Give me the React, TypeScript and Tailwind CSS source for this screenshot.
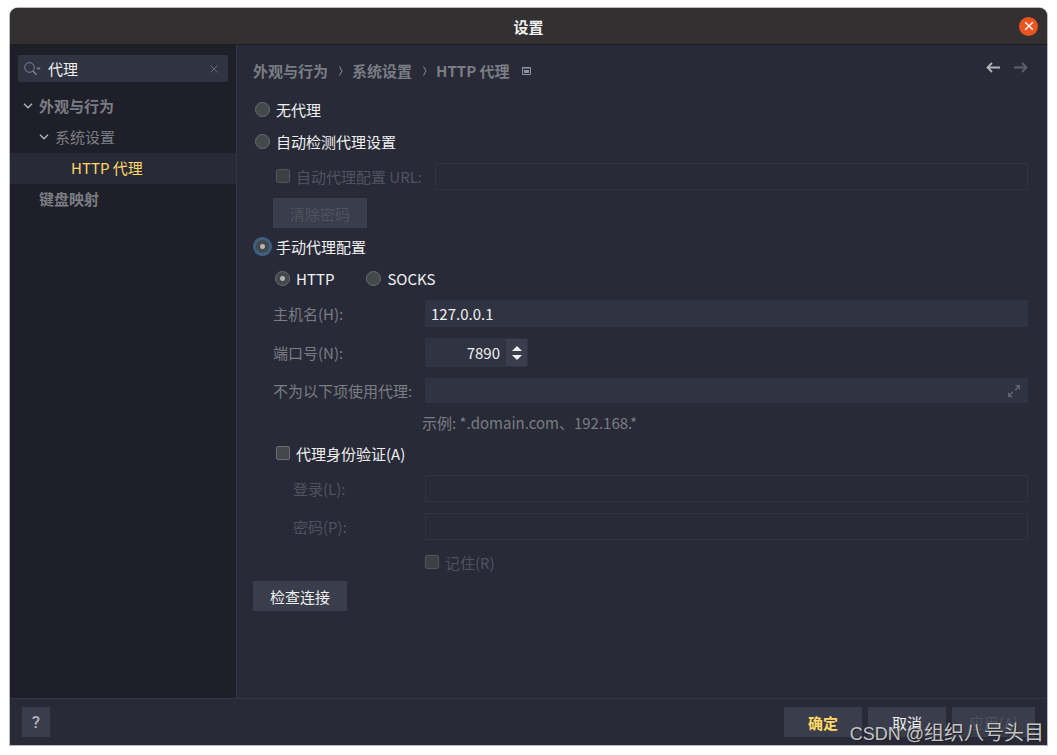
import { useState } from 'react'
import type { InputHTMLAttributes, ReactNode } from 'react'

type ProxyMode = 'none' | 'auto' | 'manual'
type ProxyKind = 'http' | 'socks'

const FIELD = 'min-w-0 flex-1 px-1.5 outline-none'
const FIELD_ON = 'bg-[#303341] text-[#f0f0f0]'
const FIELD_OFF = 'border border-[#303341] bg-transparent'
const BUTTON = 'h-[30px] bg-[#3a3d4c] text-center'

export default function App() {
  return (
    <div className="h-screen min-h-[720px] bg-white px-[10px] pt-2 pb-[10px] font-['Noto_Sans_CJK_SC',sans-serif] text-[15px] leading-6 text-[#f0f0f0]">
      <div className="relative flex h-full flex-col rounded-t-lg bg-[#282a38] ring-1 ring-[#b9b9bf]">
        <header className="grid h-[37px] shrink-0 grid-cols-[1fr_auto_1fr] items-center rounded-t-lg border-b border-[#1d1d1d] bg-[#323030] px-[9px]">
          <h1 className="col-start-2 pt-0.5 font-bold">设置</h1>
          <button
            aria-label="关闭"
            className="flex size-[19px] items-center justify-center justify-self-end rounded-full bg-[#e95420]"
          >
            <svg viewBox="0 0 10 10" className="size-[10px]" fill="none" stroke="#fff" strokeWidth="1.4" aria-hidden>
              <path d="M1.2 1.2l7.6 7.6M8.8 1.2L1.2 8.8" />
            </svg>
          </button>
        </header>

        <div className="flex min-h-0 flex-1">
          <Sidebar />
          <ProxyPanel />
        </div>

        <footer className="flex h-[47px] shrink-0 items-center gap-1.5 border-t border-[#323544] pr-3 pl-3">
          <button
            aria-label="帮助"
            className="mr-auto h-[30px] w-7 bg-[#3a3d4c] font-[Roboto,sans-serif] text-[17px] font-medium text-[#b4b4b6]"
          >
            ?
          </button>
          <button className={`${BUTTON} w-[78px] pt-0.5 font-bold text-[#ffd866]`}>确定</button>
          <button className={`${BUTTON} w-[78px] pt-0.5`}>取消</button>
          <button className={`${BUTTON} w-[83px] pt-0.5 text-[#50535f]`} disabled>
            应用(A)
          </button>
        </footer>

        <p className="pointer-events-none absolute right-[3px] -bottom-[3px] font-['Noto_Sans_CJK_SC',sans-serif] text-[20px] leading-7 text-[#c4c4c8] [text-shadow:1px_1px_1px_#222]">
          <span className="font-['Liberation_Sans',sans-serif] text-[18px]">CSDN @</span>组织八号头目
        </p>
      </div>
    </div>
  )
}

function Sidebar() {
  return (
    <aside className="w-[227px] shrink-0 border-r border-[#323544] bg-[#1f1f29] pt-[10px]">
      <div className="mx-2 flex h-[27px] items-center rounded-xs bg-[#303341] pr-[10px] pl-1.5">
        <svg viewBox="0 0 18 14" className="h-[14px] w-[18px] shrink-0" fill="none" stroke="#808591" aria-hidden>
          <circle cx="5.5" cy="5.5" r="4.8" />
          <path d="M9 9l3.5 3.8" strokeWidth="1.4" />
          <path d="M12.2 5.5h4.6l-2.3 2.6z" fill="#808591" stroke="none" />
        </svg>
        <input
          aria-label="搜索设置"
          defaultValue="代理"
          className="ml-1.5 h-[27px] min-w-0 flex-1 outline-none"
        />
        <button aria-label="清除">
          <svg viewBox="0 0 8 8" className="size-2" fill="none" stroke="#646976" aria-hidden>
            <path d="M.5 .5l7 7M7.5 .5l-7 7" />
          </svg>
        </button>
      </div>

      <ul className="mt-[9px] text-[#7a7d83]">
        <TreeItem className="pl-[13px] font-bold" open>
          外观与行为
        </TreeItem>
        <TreeItem className="pl-[29px]" open>
          系统设置
        </TreeItem>
        <TreeItem className="bg-[#282a38] pl-[61px] text-[#ffd866]">HTTP 代理</TreeItem>
        <TreeItem className="pl-[29px] font-bold">键盘映射</TreeItem>
      </ul>
    </aside>
  )
}

function TreeItem({ children, className, open }: { children: ReactNode; className: string; open?: boolean }) {
  return (
    <li className={`flex h-[31px] items-center pb-0.5 ${className}`}>
      {open && (
        <svg viewBox="0 0 10 6" className="mr-1.5 h-1.5 w-[10px]" fill="none" stroke="#b4b4b6" strokeWidth="1.4" aria-hidden>
          <path d="M1 .8l4 4 4-4" />
        </svg>
      )}
      <a href="#">{children}</a>
    </li>
  )
}

function ProxyPanel() {
  const [mode, setMode] = useState<ProxyMode>('manual')
  const [kind, setKind] = useState<ProxyKind>('http')
  const [port, setPort] = useState(7890)

  return (
    <main className="min-w-0 flex-1 pr-[19px] pl-4">
      <div className="flex h-[52px] items-center">
        <nav aria-label="路径" className="flex items-center font-bold text-[#7a7d83]">
          <a href="#">外观与行为</a>
          <Separator />
          <a href="#">系统设置</a>
          <Separator />
          <a href="#">HTTP 代理</a>
        </nav>
        <svg viewBox="0 0 9 8" className="ml-3 h-2 w-[9px]" fill="none" stroke="#8d95a3" aria-hidden>
          <path d="M.5 .5h8v7h-8z" />
          <path d="M0 1h9" />
          <path d="M2 3h5v3H2z" fill="#8d95a3" stroke="none" />
        </svg>
        <div className="mb-2 ml-auto flex gap-[14px]">
          <button aria-label="后退">
            <Arrow className="h-[11px] w-3.5 text-[#b4b4b6]" />
          </button>
          <button aria-label="前进" disabled>
            <Arrow className="h-[11px] w-3.5 rotate-180 text-[#5f6066]" />
          </button>
        </div>
      </div>

      {/* 无代理 / 自动检测 */}
      <Radio name="mode" checked={mode === 'none'} onChange={() => setMode('none')}>
        无代理
      </Radio>
      <Radio className="mt-2" name="mode" checked={mode === 'auto'} onChange={() => setMode('auto')}>
        自动检测代理设置
      </Radio>
      <div className="mt-[10px] flex h-[27px] items-stretch gap-[13px] pl-[23px]">
        <Check className="pb-0.5" disabled>
          自动代理配置 URL:
        </Check>
        <input aria-label="自动代理配置 URL" disabled className={`${FIELD} ${FIELD_OFF}`} />
      </div>
      <button disabled className={`${BUTTON} mt-2 ml-5 block w-[94px] pt-0.5 text-[#50535f]`}>
        清除密码
      </button>

      {/* 手动代理 */}
      <Radio className="mt-1.5" name="mode" ring checked={mode === 'manual'} onChange={() => setMode('manual')}>
        手动代理配置
      </Radio>
      <div className="mt-2 flex gap-[30px] pl-5">
        <Radio name="kind" checked={kind === 'http'} onChange={() => setKind('http')}>
          HTTP
        </Radio>
        <Radio name="kind" checked={kind === 'socks'} onChange={() => setKind('socks')}>
          SOCKS
        </Radio>
      </div>

      <div className="mt-[10px] flex h-[27px]">
        <Label id="host">主机名(H):</Label>
        <input id="host" defaultValue="127.0.0.1" className={`${FIELD} ${FIELD_ON}`} />
      </div>
      <div className="mt-[11px] flex h-[29px]">
        <Label id="port">端口号(N):</Label>
        <div className="flex w-[103px] rounded-xs bg-[#303341] p-px">
          <input
            id="port"
            inputMode="numeric"
            value={port}
            onChange={(e) => setPort(Number(e.target.value) || 0)}
            className="min-w-0 flex-1 pr-1.5 text-right outline-none"
          />
          <div className="flex w-[21px] flex-col items-center justify-center gap-1 bg-[#3a3d4c]">
            <button aria-label="增加" onClick={() => setPort(port + 1)}>
              <svg viewBox="0 0 10 5" className="h-[5px] w-[10px]" fill="#f0f0f0" aria-hidden>
                <path d="M5 0l5 5H0z" />
              </svg>
            </button>
            <button aria-label="减少" onClick={() => setPort(port - 1)}>
              <svg viewBox="0 0 10 5" className="h-[5px] w-[10px]" fill="#f0f0f0" aria-hidden>
                <path d="M0 0h10L5 5z" />
              </svg>
            </button>
          </div>
        </div>
      </div>
      <div className="mt-[11px] flex h-[25px]">
        <Label id="bypass">不为以下项使用代理:</Label>
        <div className="flex min-w-0 flex-1 items-center bg-[#303341] pr-2">
          <input id="bypass" className={`${FIELD} h-[25px]`} />
          <button aria-label="展开">
            <svg viewBox="0 0 12 12" className="size-3" fill="#5c616d" aria-hidden>
              <path d="M7 0h5v5l-1.7-1.7-2.5 2.5-1.2-1.2 2.5-2.5z" />
              <path d="M5 12H0V7l1.7 1.7 2.5-2.5 1.2 1.2-2.5 2.5z" />
            </svg>
          </button>
        </div>
      </div>
      <p className="mt-2 pl-[169px] text-[#7a7d83]">示例: *.domain.com、192.168.*</p>

      {/* 身份验证 */}
      <Check className="mt-1.5 ml-[23px]">代理身份验证(A)</Check>
      <div className="mt-[10px] flex h-[27px]">
        <Label id="login" nested>
          登录(L):
        </Label>
        <input id="login" disabled className={`${FIELD} ${FIELD_OFF}`} />
      </div>
      <div className="mt-[11px] flex h-[27px]">
        <Label id="password" nested>
          密码(P):
        </Label>
        <input id="password" type="password" disabled className={`${FIELD} ${FIELD_OFF}`} />
      </div>
      <Check className="mt-[10px] ml-[172px]" disabled>
        记住(R)
      </Check>

      <button className={`${BUTTON} mt-[7px] block w-[94px] pt-0.5`}>检查连接</button>
    </main>
  )
}

function Separator() {
  return (
    <svg viewBox="0 0 4 10" className="mr-[9px] ml-[11px] h-[10px] w-1" fill="none" stroke="#8b8e94" aria-hidden>
      <path d="M.5 .5L3 5 .5 9.5" />
    </svg>
  )
}

function Arrow({ className }: { className: string }) {
  return (
    <svg viewBox="0 0 14 11" className={className} fill="none" stroke="currentColor" strokeWidth="1.8" aria-hidden>
      <path d="M14 5.5H1.5M6 1L1.5 5.5 6 10" />
    </svg>
  )
}

function Label({ id, nested, children }: { id: string; nested?: boolean; children: ReactNode }) {
  return (
    <label
      htmlFor={id}
      className={`flex w-[172px] shrink-0 items-center ${nested ? 'pl-10 text-[#50535f]' : 'pl-5 text-[#7a7d83]'}`}
    >
      {children}
    </label>
  )
}

type ToggleProps = InputHTMLAttributes<HTMLInputElement> & { ring?: boolean }

function Radio({ children, className = '', ring, ...input }: ToggleProps) {
  return (
    <label className={`flex h-6 w-fit items-center gap-1.5 pl-0.5 ${className}`}>
      <input
        type="radio"
        className={`size-[15px] shrink-0 appearance-none rounded-full border bg-[#43494a] checked:bg-[radial-gradient(circle,#b4b4b6_2px,transparent_3px)] ${
          ring ? 'border-[#3d6185] ring-2 ring-[#3d6185]' : 'border-[#6a6d6d]'
        }`}
        {...input}
      />
      <span className="pt-0.5">{children}</span>
    </label>
  )
}

function Check({ children, className = '', ...input }: ToggleProps) {
  return (
    <label
      className={`flex h-6 w-fit shrink-0 items-center gap-1.5 self-center has-disabled:text-[#50535f] ${className}`}
    >
      <input
        type="checkbox"
        className="size-3.5 shrink-0 appearance-none rounded-xs border border-[#6a6d6d] bg-[#43494a] checked:bg-[#b4b4b6] disabled:border-[#525556] disabled:bg-[#3c4043]"
        {...input}
      />
      <span className="pt-0.5">{children}</span>
    </label>
  )
}
